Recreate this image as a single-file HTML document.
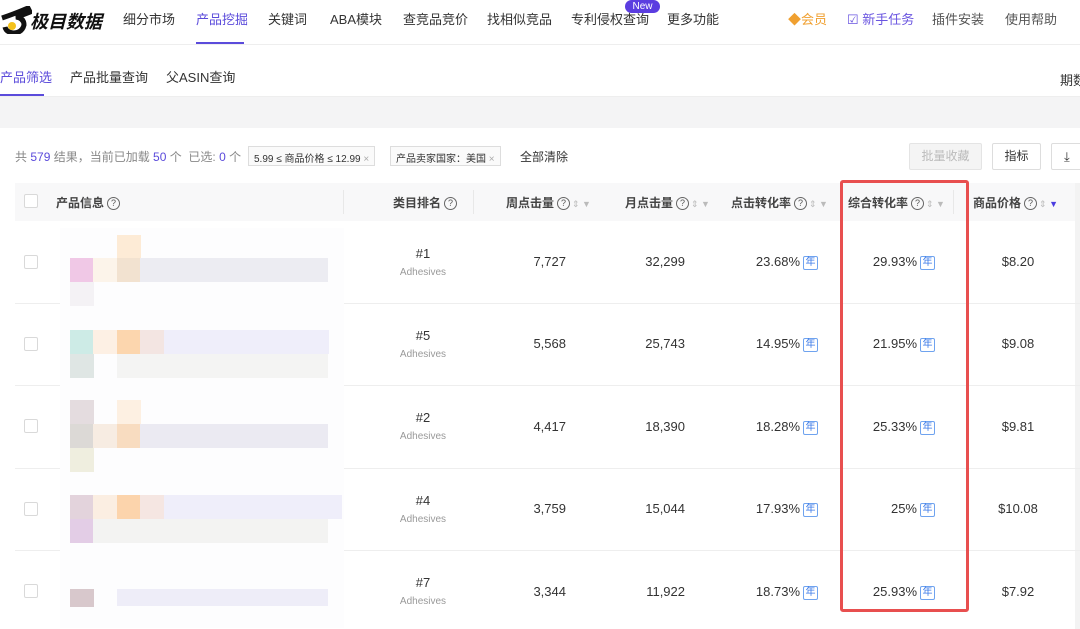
<!DOCTYPE html>
<html><head><meta charset="utf-8"><style>
*{margin:0;padding:0;box-sizing:border-box}
body{width:1080px;height:629px;overflow:hidden;background:#fff;font-family:"Liberation Sans","Noto Sans CJK SC",sans-serif;color:#333;position:relative;font-size:13px}
.a{position:absolute;white-space:nowrap}
.nav{font-size:13px;color:#333;top:9px}
.blk{position:absolute;width:24px;height:24px}
.cb{position:absolute;left:24px;width:14px;height:14px;border:1px solid #d9d9d9;border-radius:2px;background:#fff}
.num{position:absolute;font-size:13px;color:#333;text-align:right}
.yr{display:inline-block;border:1px solid #6fa3ef;color:#3b7ae8;font-size:10px;border-radius:2px;width:15px;height:14px;line-height:12px;text-align:center;margin-left:3px;vertical-align:1px}
.q{display:inline-block;width:13px;height:13px;border:1px solid #666;border-radius:50%;font-size:9px;line-height:11px;text-align:center;color:#555;vertical-align:1px;margin-left:3px;font-weight:normal}
.th{position:absolute;top:194px;font-size:12px;color:#444;font-weight:bold}
.s{color:#bbb;font-size:9px;margin-left:2px;font-weight:normal}
.hr{position:absolute;left:15px;width:1065px;height:1px;background:#eee}
</style></head><body>
<svg class="a" style="left:0;top:6px" width="32" height="28" viewBox="0 0 32 28"><path d="M2 12 Q14 8 28 2 L30 6 Q20 10 16 11 Q24 12 24 19 Q22 27 13 27 Q6 26 5 21" fill="none" stroke="#111" stroke-width="5"/><circle cx="12" cy="20" r="4" fill="#f4c21b"/></svg>
<div class="a" style="left:30px;top:8px;font-size:18px;font-weight:bold;font-style:italic;color:#111">极目数据</div>
<div class="a nav" style="left:123px">细分市场</div>
<div class="a nav" style="left:196px;color:#5b4bdb">产品挖掘</div>
<div class="a" style="left:196px;top:42px;width:48px;height:2px;background:#5b4bdb"></div>
<div class="a nav" style="left:268px">关键词</div>
<div class="a nav" style="left:330px">ABA模块</div>
<div class="a nav" style="left:403px">查竞品竞价</div>
<div class="a nav" style="left:487px">找相似竞品</div>
<div class="a nav" style="left:571px">专利侵权查询</div>
<div class="a" style="left:625px;top:0;width:35px;height:13px;background:#5b3de0;border-radius:7px;color:#fff;font-size:10px;line-height:13px;text-align:center">New</div>
<div class="a nav" style="left:667px">更多功能</div>
<div class="a nav" style="left:788px;color:#f0a030">◆会员</div>
<div class="a nav" style="left:847px;color:#6a55e0">☑ 新手任务</div>
<div class="a nav" style="left:932px;color:#555">插件安装</div>
<div class="a nav" style="left:1005px;color:#555">使用帮助</div>
<div class="a" style="left:0;top:44px;width:1080px;height:1px;background:#eee"></div>
<div class="a" style="left:0;top:67px;color:#5b4bdb">产品筛选</div>
<div class="a" style="left:0;top:94px;width:44px;height:2px;background:#5b4bdb"></div>
<div class="a" style="left:70px;top:67px">产品批量查询</div>
<div class="a" style="left:166px;top:67px">父ASIN查询</div>
<div class="a" style="left:1060px;top:70px">期数</div>
<div class="a" style="left:0;top:96px;width:1080px;height:32px;background:#f4f4f5;border-top:1px solid #eee"></div>
<div class="a" style="left:15px;top:148px;color:#888;font-size:12px">共 <span style="color:#5b4bdb">579</span> 结果，当前已加载 <span style="color:#5b4bdb">50</span> 个 &nbsp;已选: <span style="color:#5b4bdb">0</span> 个</div>
<div class="a" style="left:248px;top:146px;border:1px solid #ddd;background:#fafafa;font-size:10px;padding:3px 5px;height:20px">5.99 ≤ 商品价格 ≤ 12.99 <span style="color:#aaa">×</span></div>
<div class="a" style="left:390px;top:146px;border:1px solid #ddd;background:#fafafa;font-size:10px;padding:3px 5px;height:20px">产品卖家国家：美国 <span style="color:#aaa">×</span></div>
<div class="a" style="left:520px;top:148px;font-size:12px">全部清除</div>
<div class="a" style="left:909px;top:143px;width:73px;height:27px;border:1px solid #e4e4e4;background:#f4f4f4;color:#bbb;text-align:center;line-height:25px;border-radius:2px;font-size:12px">批量收藏</div>
<div class="a" style="left:992px;top:143px;width:49px;height:27px;border:1px solid #ddd;text-align:center;line-height:25px;border-radius:2px;font-size:12px">指标</div>
<div class="a" style="left:1051px;top:143px;width:40px;height:27px;border:1px solid #ddd;line-height:25px;padding-left:12px;border-radius:2px">⤓</div>
<div class="a" style="left:15px;top:183px;width:1065px;height:38px;background:#f8f8f9"></div>
<div class="cb" style="top:194px"></div>
<div class="th" style="left:56px">产品信息<span class="q">?</span></div>
<div class="a" style="left:343px;top:190px;width:1px;height:24px;background:#e8e8e8"></div>
<div class="th" style="left:393px">类目排名<span class="q">?</span></div>
<div class="a" style="left:473px;top:190px;width:1px;height:24px;background:#e8e8e8"></div>
<div class="th" style="left:506px">周点击量<span class="q">?</span><span class="s">⇕ ▼</span></div>
<div class="th" style="left:625px">月点击量<span class="q">?</span><span class="s">⇕ ▼</span></div>
<div class="th" style="left:731px">点击转化率<span class="q">?</span><span class="s">⇕ ▼</span></div>
<div class="th" style="left:848px">综合转化率<span class="q">?</span><span class="s">⇕ ▼</span></div>
<div class="a" style="left:953px;top:190px;width:1px;height:24px;background:#e8e8e8"></div>
<div class="th" style="left:973px">商品价格<span class="q">?</span><span class="s">⇕ <span style="color:#4a3de0">▼</span></span></div>
<div class="a" style="left:1075px;top:183px;width:5px;height:446px;background:#f3f3f3"></div>
<div class="hr" style="top:303px"></div><div class="hr" style="top:385px"></div><div class="hr" style="top:468px"></div><div class="hr" style="top:550px"></div>
<div class="a" style="left:60px;top:228px;width:284px;height:400px;background:#fdfdfe"></div>
<div class="blk" style="left:117px;top:235px;background:#fdebd6"></div>
<div class="blk" style="left:70px;top:258px;background:#f0c8e6"></div>
<div class="blk" style="left:93px;top:258px;background:#fcf4ea"></div>
<div class="blk" style="left:117px;top:258px;background:#f2e2d0"></div>
<div class="a" style="left:140px;top:258px;width:188px;height:24px;background:#ececf2"></div>
<div class="blk" style="left:70px;top:282px;background:#f4f2f5"></div>
<div class="blk" style="left:70px;top:330px;background:#cdebe6"></div>
<div class="blk" style="left:93px;top:330px;background:#fdf0e4"></div>
<div class="blk" style="left:117px;top:330px;background:#fcd6ae"></div>
<div class="blk" style="left:140px;top:330px;background:#f3e5e2"></div>
<div class="a" style="left:164px;top:330px;width:165px;height:24px;background:#efeefa"></div>
<div class="blk" style="left:70px;top:354px;background:#dfe6e4"></div>
<div class="a" style="left:117px;top:354px;width:211px;height:24px;background:#f4f4f3"></div>
<div class="blk" style="left:70px;top:400px;background:#e4dcdf"></div>
<div class="blk" style="left:117px;top:400px;background:#fdf0e2"></div>
<div class="blk" style="left:70px;top:424px;background:#dcd9d6"></div>
<div class="blk" style="left:93px;top:424px;background:#f7ece2"></div>
<div class="blk" style="left:117px;top:424px;background:#f8dcc0"></div>
<div class="a" style="left:140px;top:424px;width:188px;height:24px;background:#ebeaf2"></div>
<div class="blk" style="left:70px;top:448px;background:#efeedf"></div>
<div class="blk" style="left:70px;top:495px;background:#e3d3dc"></div>
<div class="blk" style="left:93px;top:495px;background:#fbeee2"></div>
<div class="blk" style="left:117px;top:495px;background:#fcd4ac"></div>
<div class="blk" style="left:140px;top:495px;background:#f5e6e2"></div>
<div class="a" style="left:164px;top:495px;width:178px;height:24px;background:#efeefa"></div>
<div class="blk" style="left:70px;top:519px;background:#e3cde6"></div>
<div class="a" style="left:93px;top:519px;width:235px;height:24px;background:#f3f3f2"></div>
<div class="blk" style="left:70px;top:589px;height:18px;background:#d8c8cc"></div>
<div class="a" style="left:117px;top:589px;width:211px;height:17px;background:#eeedf8"></div>
<div class="cb" style="top:255px"></div><div class="cb" style="top:337px"></div><div class="cb" style="top:419px"></div><div class="cb" style="top:502px"></div><div class="cb" style="top:584px"></div>
<div class="a" style="left:383px;top:245px;width:80px;text-align:center;line-height:17px">#1<br><span style="font-size:10px;color:#999">Adhesives</span></div>
<div class="a" style="left:383px;top:327px;width:80px;text-align:center;line-height:17px">#5<br><span style="font-size:10px;color:#999">Adhesives</span></div>
<div class="a" style="left:383px;top:409px;width:80px;text-align:center;line-height:17px">#2<br><span style="font-size:10px;color:#999">Adhesives</span></div>
<div class="a" style="left:383px;top:492px;width:80px;text-align:center;line-height:17px">#4<br><span style="font-size:10px;color:#999">Adhesives</span></div>
<div class="a" style="left:383px;top:574px;width:80px;text-align:center;line-height:17px">#7<br><span style="font-size:10px;color:#999">Adhesives</span></div>
<div class="num" style="right:514px;top:254px">7,727</div><div class="num" style="right:395px;top:254px">32,299</div>
<div class="num" style="right:262px;top:254px">23.68%<span class="yr">年</span></div><div class="num" style="right:145px;top:254px">29.93%<span class="yr">年</span></div>
<div class="num" style="left:990px;width:56px;text-align:center;top:254px">$8.20</div>
<div class="num" style="right:514px;top:336px">5,568</div><div class="num" style="right:395px;top:336px">25,743</div>
<div class="num" style="right:262px;top:336px">14.95%<span class="yr">年</span></div><div class="num" style="right:145px;top:336px">21.95%<span class="yr">年</span></div>
<div class="num" style="left:990px;width:56px;text-align:center;top:336px">$9.08</div>
<div class="num" style="right:514px;top:419px">4,417</div><div class="num" style="right:395px;top:419px">18,390</div>
<div class="num" style="right:262px;top:419px">18.28%<span class="yr">年</span></div><div class="num" style="right:145px;top:419px">25.33%<span class="yr">年</span></div>
<div class="num" style="left:990px;width:56px;text-align:center;top:419px">$9.81</div>
<div class="num" style="right:514px;top:501px">3,759</div><div class="num" style="right:395px;top:501px">15,044</div>
<div class="num" style="right:262px;top:501px">17.93%<span class="yr">年</span></div><div class="num" style="right:145px;top:501px">25%<span class="yr">年</span></div>
<div class="num" style="left:990px;width:56px;text-align:center;top:501px">$10.08</div>
<div class="num" style="right:514px;top:584px">3,344</div><div class="num" style="right:395px;top:584px">11,922</div>
<div class="num" style="right:262px;top:584px">18.73%<span class="yr">年</span></div><div class="num" style="right:145px;top:584px">25.93%<span class="yr">年</span></div>
<div class="num" style="left:990px;width:56px;text-align:center;top:584px">$7.92</div>
<div class="a" style="left:840px;top:180px;width:129px;height:432px;border:3px solid #e84f4f;border-radius:3px"></div>
</body></html>
